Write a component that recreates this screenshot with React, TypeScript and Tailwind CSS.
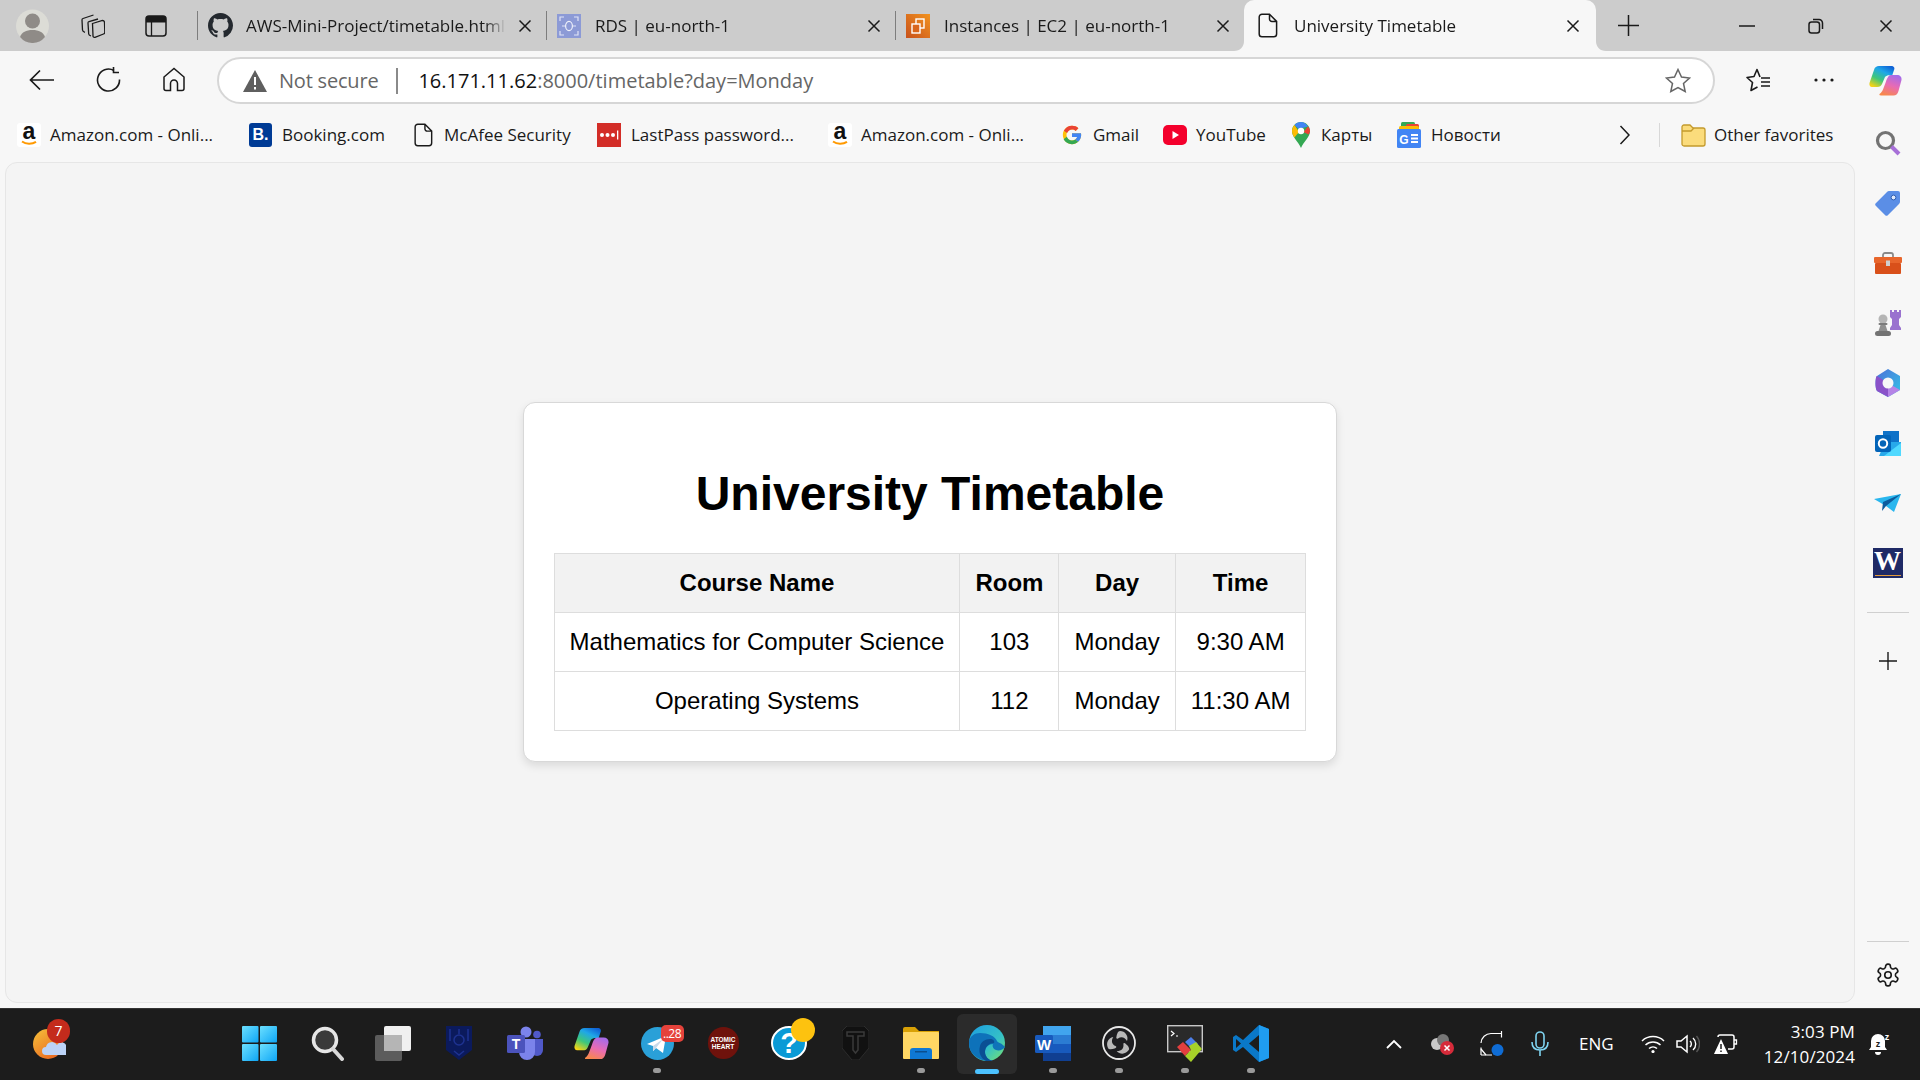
import React from "react";

const UI = { fontFamily: '"Open Sans", "Noto Sans", sans-serif' };

function X({ className = "" }: { className?: string }) {
  return (
    <svg width="14" height="14" viewBox="0 0 14 14" className={className}>
      <path d="M1.500 1.500 12.500 12.500M12.500 1.500 1.500 12.500" stroke="#1a1a1a" strokeWidth="1.500" fill="none" />
    </svg>
  );
}
function Doc({ w = 20, h = 25 }: { w?: number; h?: number }) {
  return (
    <svg width={w} height={h} viewBox="0 0 20 25">
      <path d="M4 1.200h7.500L18.600 8.400V21A2.800 2.800 0 0 1 15.800 23.800H4A2.800 2.800 0 0 1 1.200 21V4A2.800 2.800 0 0 1 4 1.200ZM11.500 1.200V6A2.400 2.400 0 0 0 13.900 8.400H18.600" fill="none" stroke="#1a1a1a" strokeWidth="1.500" />
    </svg>
  );
}
function Github() {
  return (
    <svg width="25" height="25" viewBox="0 0 16 16">
      <path fill="#24292f" d="M8 0C3.58 0 0 3.58 0 8c0 3.54 2.29 6.53 5.47 7.59.4.07.55-.17.55-.38 0-.19-.01-.82-.01-1.49-2.01.37-2.53-.49-2.69-.94-.09-.23-.48-.94-.82-1.13-.28-.15-.68-.52-.01-.53.63-.01 1.08.58 1.23.82.72 1.21 1.87.87 2.33.66.07-.52.28-.87.51-1.07-1.78-.2-3.64-.89-3.64-3.95 0-.87.31-1.59.82-2.15-.08-.2-.36-1.02.08-2.12 0 0 .67-.21 2.2.82.64-.18 1.32-.27 2-.27s1.36.09 2 .27c1.53-1.04 2.2-.82 2.2-.82.44 1.1.16 1.92.08 2.12.51.56.82 1.27.82 2.15 0 3.07-1.87 3.75-3.65 3.95.29.25.54.73.54 1.48 0 1.07-.01 1.93-.01 2.2 0 .21.15.46.55.38A8.010 8.010 0 0 0 16 8c0-4.420-3.580-8-8-8Z" />
    </svg>
  );
}
function Rds() {
  return (
    <svg width="24" height="24" viewBox="0 0 24 24">
      <rect width="24" height="24" fill="#8c9ad6" />
      <path d="M3 7V3h4M21 7V3h-4M3 17v4h4M21 17v4h-4" stroke="#dfe3f5" strokeWidth="1.200" fill="none" />
      <ellipse cx="12" cy="12" rx="3.400" ry="4.600" stroke="#eef0fa" strokeWidth="1.200" fill="none" />
      <path d="M5 12h3M16 12h3" stroke="#dfe3f5" strokeWidth="1.200" />
    </svg>
  );
}
function Ec2() {
  return (
    <svg width="24" height="24" viewBox="0 0 24 24">
      <defs>
        <linearGradient id="ec2g" x1="0" y1="1" x2="1" y2="0">
          <stop offset="0" stopColor="#c8511b" />
          <stop offset="1" stopColor="#f2931f" />
        </linearGradient>
      </defs>
      <rect width="24" height="24" fill="url(#ec2g)" />
      <rect x="10" y="5" width="8" height="9" fill="none" stroke="#fff" strokeWidth="1.400" />
      <rect x="6" y="10" width="8" height="9" fill="#d9661c" stroke="#fff" strokeWidth="1.400" />
    </svg>
  );
}

function CopilotMark({ size = 33, id }: { size?: number; id: string }) {
  return (
    <svg width={size} height={(size * 31) / 33} viewBox="0 0 33 31">
      <defs>
        <linearGradient id={id + "a"} x1="0.800" y1="0" x2="0.200" y2="1">
          <stop offset="0" stopColor="#0f62d6" />
          <stop offset="0.300" stopColor="#1fa7e8" />
          <stop offset="0.650" stopColor="#3ec77a" />
          <stop offset="1" stopColor="#f5d315" />
        </linearGradient>
        <linearGradient id={id + "b"} x1="0.700" y1="0" x2="0.300" y2="1">
          <stop offset="0" stopColor="#a66bea" />
          <stop offset="0.500" stopColor="#e86bb4" />
          <stop offset="1" stopColor="#f8884a" />
        </linearGradient>
      </defs>
      <path d="M10 1h12c3 0 4 2 3 4l-2 6c-2-1-5-1-7 1l-3 7c-1 2-2 3-5 3H3c-2 0-3-2-2.500-4L5 5c.8-3 2.500-4 5-4Z" fill={"url(#" + id + "a)"} />
      <path d="M22 10h6c3 0 5 2 4.500 5l-3 11c-.8 3-2.500 4.500-5 4.500H12c-2 0-2-1-1-2 1-.5 2-2 3-4l3-8c1-3 2.500-6.500 5-6.500Z" fill={"url(#" + id + "b)"} />
    </svg>
  );
}

function Tab({ icon, title, active }: { icon: React.ReactNode; title: string; active?: boolean }) {
  return (
    <div
      className={
        active
          ? "relative h-[51px] w-[352px] flex items-center bg-[#f7f7f7] rounded-t-[10px] pl-[14px] pr-[16px]"
          : "h-[51px] w-[349px] flex items-center"
      }
    >
      {active ? (
        <>
          <svg width="10" height="10" viewBox="0 0 10 10" className="absolute bottom-0 left-[-10px]">
            <path d="M10 0V10H0C6 10 10 6 10 0Z" fill="#f7f7f7" />
          </svg>
          <svg width="10" height="10" viewBox="0 0 10 10" className="absolute bottom-0 right-[-10px]">
            <path d="M0 0V10H10C4 10 0 6 0 0Z" fill="#f7f7f7" />
          </svg>
        </>
      ) : (
        <div className="w-px h-[29px] bg-[#7d7d7d] mr-[10px]" />
      )}
      <div className={active ? "w-[36px] shrink-0 flex" : "w-[38px] shrink-0 flex"}>{icon}</div>
      <div className="flex-1 min-w-0 overflow-hidden whitespace-nowrap text-[17px] text-[#1a1a1a] [mask-image:linear-gradient(to_right,black_92%,transparent_100%)]">
        {title}
      </div>
      <X className={active ? "ml-[10px]" : "ml-[12px] mr-[14px]"} />
    </div>
  );
}

function Bookmark({ icon, label, w, gap = 10 }: { icon: React.ReactNode; label: string; w: number; gap?: number }) {
  return (
    <div className="flex items-center shrink-0" style={{ width: w, gap }}>
      {icon}
      <span className="text-[17px] text-[#1a1a1a] whitespace-nowrap">{label}</span>
    </div>
  );
}

function Amazon() {
  return (
    <svg width="24" height="24" viewBox="0 0 24 24" className="overflow-visible">
      <rect width="24" height="24" rx="3" fill="#fff" />
      <text x="12" y="16" textAnchor="middle" fontSize="23" fontWeight="700" fill="#111" fontFamily="Liberation Sans, sans-serif">a</text>
      <path d="M5 18.500c4 3 10 3 14 .3" stroke="#f90" strokeWidth="2" fill="none" />
    </svg>
  );
}
function Booking() {
  return (
    <div className="w-[23px] h-[24px] rounded-[3px] bg-[#003b95] text-white font-bold text-[16px] leading-[24px] text-center" style={{ fontFamily: '"Liberation Sans", sans-serif' }}>
      B.
    </div>
  );
}
function LastPass() {
  return (
    <svg width="24" height="24" viewBox="0 0 24 24">
      <rect width="24" height="24" fill="#d32d27" />
      <circle cx="5" cy="12" r="2" fill="#fff" />
      <circle cx="10.500" cy="12" r="2" fill="#fff" />
      <circle cx="16" cy="12" r="2" fill="#fff" />
      <rect x="20" y="7.500" width="1.300" height="9" fill="#fff" />
    </svg>
  );
}
function GoogleG() {
  return (
    <svg width="22" height="22" viewBox="0 0 48 48">
      <path fill="#FFC107" d="M43.600 20H24v8.500h11.300C33.700 33.100 29.300 36 24 36c-6.600 0-12-5.400-12-12s5.400-12 12-12c3 0 5.800 1.100 7.900 3l6-6C34.300 5.700 29.400 4 24 4 13 4 4 13 4 24s9 20 20 20 20-9 20-20c0-1.300-.1-2.700-.4-4Z" />
      <path fill="#EA4335" d="m6.300 14.700 7 5.100C15.200 15.200 19.200 12 24 12c3 0 5.800 1.100 7.900 3l6-6C34.300 5.700 29.400 4 24 4 16.300 4 9.700 8.300 6.300 14.700Z" />
      <path fill="#34A853" d="M24 44c5.200 0 9.900-2 13.400-5.200l-6.200-5.200C29.200 35.100 26.700 36 24 36c-5.200 0-9.600-3.300-11.300-8l-7 5.400C9 39.700 16 44 24 44Z" />
      <path fill="#4285F4" d="M43.600 20H24v8.500h11.300c-.8 2.200-2.200 4-4.100 5.200l6.200 5.200C41 35.800 44 30.400 44 24c0-1.300-.1-2.700-.4-4Z" />
    </svg>
  );
}
function YouTube() {
  return (
    <svg width="24" height="24" viewBox="0 0 24 24">
      <rect x="0" y="2" width="24" height="20" rx="5" fill="#f4002c" />
      <path d="M9.500 8v8l6.500-4Z" fill="#fff" />
    </svg>
  );
}
function Maps() {
  return (
    <svg width="18" height="26" viewBox="0 0 18 26">
      <path d="M9 0C4 0 0 4 0 9c0 6 6 10 9 17 3-7 9-11 9-17 0-5-4-9-9-9Z" fill="#34a853" />
      <path d="M9 0C6.400 0 4 1.100 2.500 3l4 4L16 4.500C14.400 1.800 11.900 0 9 0Z" fill="#4285f4" />
      <path d="M2.500 3C1 4.600 0 6.700 0 9c0 2.500 1 4.600 2.400 6.500L7 10Z" fill="#fbbc04" />
      <path d="M16 4.500 11.500 10l5 2.500C17.500 11.200 18 10.100 18 9c0-1.600-.8-3.200-2-4.500Z" fill="#ea4335" />
      <circle cx="9" cy="9" r="3.200" fill="#fff" />
    </svg>
  );
}
function News() {
  return (
    <svg width="24" height="26" viewBox="0 0 24 26">
      <rect x="4" y="0" width="14" height="8" rx="1.500" fill="#34a853" />
      <rect x="9" y="2" width="13" height="8" rx="1.500" fill="#ea4335" />
      <rect x="2" y="4" width="20" height="8" rx="1.500" fill="#fbbc04" />
      <rect x="0" y="7" width="24" height="19" rx="1.500" fill="#4285f4" />
      <text x="7" y="21.500" textAnchor="middle" fontSize="12" fontWeight="700" fill="#fff" fontFamily="Liberation Sans, sans-serif">G</text>
      <path d="M14 13h7M14 16.500h7M14 20h7" stroke="#fff" strokeWidth="1.800" />
    </svg>
  );
}
function Folder() {
  return (
    <svg width="25" height="24" viewBox="0 0 25 24">
      <path d="M1 4a2 2 0 0 1 2-2h6l3 3h10a2 2 0 0 1 2 2v14a2 2 0 0 1-2 2H3a2 2 0 0 1-2-2Z" fill="#fbdc7c" stroke="#c49a2c" strokeWidth="1.300" />
      <path d="M1 8h9l3-3" fill="none" stroke="#c49a2c" strokeWidth="1.300" />
    </svg>
  );
}

const RAIL: React.ReactNode[] = [
  <svg width="28" height="28" viewBox="0 0 28 28">
    <circle cx="11.500" cy="11.500" r="8" fill="none" stroke="#737373" strokeWidth="3.200" />
    <path d="M17.500 17.500 25 25" stroke="#a770d8" strokeWidth="4" />
  </svg>,
  <svg width="26" height="26" viewBox="0 0 26 26">
    <path d="M14 1h9a2 2 0 0 1 2 2v9a3 3 0 0 1-1 2L13 25a2 2 0 0 1-3 0L1 16a2 2 0 0 1 0-3L12 2a3 3 0 0 1 2-1Z" fill="#5b8ee6" />
    <circle cx="18.500" cy="7.500" r="2.400" fill="#dfe9fb" stroke="#2e5cb0" strokeWidth="1" />
  </svg>,
  <svg width="28" height="22" viewBox="0 0 28 22">
    <path d="M9 6V3a2 2 0 0 1 2-2h6a2 2 0 0 1 2 2v3" fill="none" stroke="#8a8a8a" strokeWidth="1.800" />
    <rect x="0" y="5" width="28" height="6" rx="1" fill="#e8662c" />
    <rect x="1" y="11" width="26" height="11" rx="1" fill="#d9501a" />
    <rect x="12" y="8.500" width="4" height="5.500" fill="#cfcfcf" />
  </svg>,
  <svg width="28" height="28" viewBox="0 0 28 28">
    <path d="M16 1h2v2h2V1h3v2h2V1h2v7l-2 2v6l2 3v2H16v-2l2-3v-6l-2-2Z" fill="#9a72cf" />
    <circle cx="9" cy="10" r="4.500" fill="#b5b5b5" />
    <rect x="4.500" y="14" width="9" height="2" rx="1" fill="#7b7b7b" />
    <path d="M6.500 16h5l2 6h-9Z" fill="#8f8f8f" />
    <rect x="1" y="22" width="16" height="5" rx="2.500" fill="#737373" />
  </svg>,
  <svg width="26" height="28" viewBox="0 0 26 28">
    <defs>
      <linearGradient id="m3a" x1="0" y1="0" x2="1" y2="1">
        <stop offset="0" stopColor="#4f6fd8" />
        <stop offset="1" stopColor="#30c5e8" />
      </linearGradient>
    </defs>
    <path d="M13 0 25 7v14l-12 7-11-6c-2-2-2-14 0-15Z" fill="url(#m3a)" />
    <path d="M2 7 13 14v14L2 22c-2-2-2-14 0-15Z" fill="#8a52c9" />
    <path d="M25 21 13 14v14Z" fill="#b583e6" />
    <circle cx="13" cy="14" r="5.500" fill="#f7f7f7" />
  </svg>,
  <svg width="26" height="26" viewBox="0 0 26 26">
    <rect x="8" y="1" width="16" height="13" fill="#0f72c8" />
    <path d="M10 12h16v14H4Z" fill="#28a8ea" />
    <path d="M26 13v13H9Z" fill="#50d9ff" />
    <rect x="0" y="5" width="16" height="17" rx="2" fill="#0364b8" />
    <circle cx="8" cy="13.500" r="4.200" fill="none" stroke="#fff" strokeWidth="2" />
  </svg>,
  <svg width="27" height="18" viewBox="0 0 27 18">
    <path d="M0 5 27 0 20 18 12 12Z" fill="#29b6ee" />
    <path d="M27 0 9 8 8 17 12 12Z" fill="#0c5c9e" />
  </svg>,
  <div className="w-[30px] h-[30px] bg-[#1f2a66] flex flex-col items-center justify-between pb-[2px]">
    <span className="text-white font-bold text-[27px] leading-[26px]" style={{ fontFamily: '"Liberation Serif", serif' }}>W</span>
    <div className="w-[26px] h-px bg-[#e39a3a]" />
  </div>,
];

const W11 = (
  <svg width="35" height="35" viewBox="0 0 35 35" className="mr-[4px]">
    <defs>
      <linearGradient id="w1" x1="0" y1="0" x2="1" y2="1">
        <stop offset="0" stopColor="#6ce0ff" />
        <stop offset="1" stopColor="#0ea5f5" />
      </linearGradient>
    </defs>
    <rect x="0" y="0" width="16.500" height="16.500" rx="1" fill="url(#w1)" />
    <rect x="18" y="0" width="17" height="16.500" rx="1" fill="url(#w1)" />
    <rect x="0" y="18" width="16.500" height="17" rx="1" fill="url(#w1)" />
    <rect x="18" y="18" width="17" height="17" rx="1" fill="url(#w1)" />
  </svg>
);
const SearchI = (
  <svg width="33" height="35" viewBox="0 0 33 35">
    <circle cx="14" cy="14" r="11.500" fill="#3a3a3a" stroke="#e6e6e6" strokeWidth="3.500" />
    <path d="M22 23 31 33" stroke="#d8d8d8" strokeWidth="4" strokeLinecap="round" />
  </svg>
);
const TaskView = (
  <svg width="36" height="35" viewBox="0 0 36 35">
    <rect x="0" y="9" width="27" height="26" rx="2" fill="#5c5c5c" />
    <rect x="9" y="0" width="27" height="25" rx="2" fill="#f0f0f0" />
    <rect x="9" y="9" width="18" height="16" fill="#b5b5b5" />
  </svg>
);
const Shield = (
  <svg width="26" height="34" viewBox="0 0 26 34">
    <path d="M0 0h26v24L13 34 0 24Z" fill="#0b1a5c" />
    <circle cx="13" cy="14" r="5" fill="none" stroke="#1e3290" strokeWidth="1.500" />
    <path d="M4 3v12M22 3v12M13 3v5M8 25l5 4 5-4" stroke="#1e3290" strokeWidth="1.500" fill="none" />
  </svg>
);
const Teams = (
  <svg width="36" height="34" viewBox="0 0 36 34">
    <circle cx="19" cy="6" r="5.500" fill="#7b83eb" />
    <circle cx="30" cy="8.500" r="3.800" fill="#5059c9" />
    <path d="M24 13h12v11a6 6 0 0 1-12 0Z" fill="#5059c9" />
    <path d="M10 13h18v13a8 8 0 0 1-16 0Z" fill="#7b83eb" />
    <rect x="0" y="9" width="18" height="18" rx="1.500" fill="#4b53bc" />
    <text x="9" y="23" textAnchor="middle" fontSize="14" fontWeight="700" fill="#fff" fontFamily="Liberation Sans, sans-serif">T</text>
  </svg>
);
const Telegram = (
  <div className="relative w-[33px] h-[33px]">
    <svg width="33" height="33" viewBox="0 0 33 33">
      <circle cx="16.500" cy="16.500" r="16.500" fill="#2aa0d8" />
      <path d="M6 17 25 9 22 26 15 21 12 24 12 19Z" fill="#fff" />
      <path d="M12 19 22 12 15 21 12 24Z" fill="#c8daea" />
    </svg>
    <div className="absolute top-[-2px] left-[20px] w-[23px] h-[17px] rounded-[5px] bg-[#e5423b] text-white text-[12px] leading-[17px] text-center tracking-[-0.5px]">..28</div>
  </div>
);
const Atomic = (
  <div className="w-[31px] h-[32px] rounded-full bg-[#6f120c] flex items-center justify-center">
    <span className="text-white font-bold text-[6.500px] leading-[7px] text-center" style={{ fontFamily: '"Liberation Sans", sans-serif' }}>ATOMIC<br />HEART</span>
  </div>
);
const Help = (
  <div className="relative w-[36px] h-[34px]">
    <svg width="36" height="34" viewBox="0 0 36 34">
      <ellipse cx="18" cy="17" rx="17" ry="16" fill="#0a9ad6" stroke="#fff" strokeWidth="2" />
      <text x="18" y="27" textAnchor="middle" fontSize="29" fontWeight="700" fill="#fff" fontFamily="Liberation Sans, sans-serif">?</text>
    </svg>
    <div className="absolute top-[-8px] left-[20px] w-[24px] h-[24px] rounded-full bg-[#fdc20f]" />
  </div>
);
const Tank = (
  <svg width="27" height="34" viewBox="0 0 27 34">
    <path d="M5 0h17l5 5v17L17 34h-7L0 22V5Z" fill="#111" stroke="#2c2c2c" strokeWidth="1" />
    <path d="M5 6h17v4h-6v14l-2.500 3-2.500-3V10H5Z" fill="none" stroke="#3a3a3a" strokeWidth="1.500" />
  </svg>
);
const Explorer = (
  <svg width="36" height="32" viewBox="0 0 36 32">
    <path d="M0 2a2 2 0 0 1 2-2h10l4 4h20v6H0Z" fill="#d9a106" />
    <rect x="0" y="5" width="36" height="27" rx="1" fill="#ffd764" />
    <path d="M7 32v-8a3 3 0 0 1 3-3h16a3 3 0 0 1 3 3v8Z" fill="#0f78d4" />
    <rect x="12" y="24" width="12" height="1.500" fill="#0a4e8f" />
  </svg>
);
const Edge = (
  <svg width="36" height="36" viewBox="0 0 36 36">
    <defs>
      <linearGradient id="eg1" x1="0" y1="0" x2="1" y2="1">
        <stop offset="0" stopColor="#1b9de2" />
        <stop offset="0.600" stopColor="#35c1c6" />
        <stop offset="1" stopColor="#7de36a" />
      </linearGradient>
    </defs>
    <circle cx="18" cy="18" r="18" fill="url(#eg1)" />
    <path d="M36 22c-2 3-6 4-9 3-3-1-4-4-3-6-4 0-8 3-8 8 0 4 3 8 8 9-12 1-24-5-24-18C0 11 6 8 11 8c8 0 15 3 17 8 1 2 5 2 8 6Z" fill="#0d6fb8" opacity="0.950" />
    <path d="M17 36c-5-3-8-8-6-15 1-4 5-7 10-7 3 0 5 2 4 4-4 0-9 3-9 9 0 4 3 8 8 9Z" fill="#0a4f94" />
  </svg>
);
const Word = (
  <svg width="36" height="35" viewBox="0 0 36 35">
    <rect x="8" y="0" width="28" height="35" rx="2" fill="#2b7cd3" />
    <rect x="8" y="0" width="28" height="9" fill="#41a5ee" />
    <rect x="8" y="18" width="28" height="9" fill="#185abd" />
    <rect x="8" y="27" width="28" height="8" fill="#103f91" />
    <rect x="0" y="9" width="18" height="18" rx="1.500" fill="#185abd" />
    <text x="9" y="23.500" textAnchor="middle" fontSize="15" fontWeight="700" fill="#fff" fontFamily="Liberation Sans, sans-serif">W</text>
  </svg>
);
const OBS_BLADE = "M18 5C23 5 27 10 25 15C23 11 19 10 16 12.500C14.500 13.500 14 12 14.500 10.500C15 8 16 5 18 5Z";
const Obs = (
  <svg width="34" height="34" viewBox="0 0 34 34">
    <circle cx="17" cy="17" r="16" fill="#1d1d20" stroke="#e8e8e8" strokeWidth="1.800" />
    <path d={OBS_BLADE} fill="#b8b8b8" />
    <path d={OBS_BLADE} fill="#b8b8b8" transform="rotate(120 17 17)" />
    <path d={OBS_BLADE} fill="#b8b8b8" transform="rotate(240 17 17)" />
  </svg>
);
const Terminal = (
  <svg width="36" height="37" viewBox="0 0 36 37">
    <rect x="0.700" y="0.700" width="34.600" height="26" fill="#2a2a2a" stroke="#c8c8c8" strokeWidth="1.400" />
    <path d="M4 6 7 8.500 4 11M9 11h2" stroke="#fff" strokeWidth="1.200" fill="none" />
    <path d="M10 22 16 17 24 25 18 31Z" fill="#e23f3f" />
    <path d="M18 17 24 12 31 19 25 24Z" fill="#4d7fe8" />
    <path d="M18 31 24 25 22 21 29 17 35 24 24 37Z" fill="#a7d129" />
  </svg>
);
const VsCode = (
  <svg width="36" height="37" viewBox="0 0 36 37">
    <path d="M26 0 36 4v29l-10 4L10 22 3 27 0 25V12l3-2 7 5Z" fill="#0a78c8" />
    <path d="M26 0 36 4v29l-10 4Z" fill="#1f9cf0" />
    <path d="M26 10v17l-10-8.500Z" fill="#1c1c1c" />
    <path d="M3 14v9l5-4.500Z" fill="#1c1c1c" />
  </svg>
);

const TASK: { el: React.ReactNode; dot?: boolean; active?: boolean }[] = [
  { el: W11 },
  { el: SearchI },
  { el: TaskView },
  { el: Shield },
  { el: Teams },
  { el: <CopilotMark size={35} id="tb" /> },
  { el: Telegram, dot: true },
  { el: Atomic },
  { el: Help },
  { el: Tank },
  { el: Explorer, dot: true },
  { el: Edge, active: true },
  { el: Word, dot: true },
  { el: Obs, dot: true },
  { el: Terminal, dot: true },
  { el: VsCode, dot: true },
];

function Taskbar() {
  return (
    <div className="h-[72px] shrink-0 bg-[#1c1c1c] border-t border-[#333333] flex items-stretch text-white" style={UI}>
      <div className="w-[228px] shrink-0 pl-[33px] pt-[10px]">
        <div className="relative w-[37px] h-[50px]">
          <svg width="33" height="32" viewBox="0 0 33 32" className="absolute top-[9px] left-0">
            <defs>
              <linearGradient id="sun" x1="0" y1="0" x2="0.800" y2="1">
                <stop offset="0" stopColor="#f6c13a" />
                <stop offset="1" stopColor="#e9641f" />
              </linearGradient>
            </defs>
            <circle cx="15" cy="16" r="15" fill="url(#sun)" />
            <path d="M13 27a4 4 0 0 1 0-8 6 6 0 0 1 11-2 5 5 0 0 1 9 5v5Z" fill="#bcd3f7" />
          </svg>
          <div className="absolute top-[0px] left-[14px] w-[23px] h-[24px] rounded-full bg-[#c42b1c] text-white text-[14px] leading-[24px] text-center">7</div>
        </div>
      </div>
      <div className="flex">
        {TASK.map((t, i) => (
          <div key={i} className="relative w-[66px] flex items-center justify-center pb-[3px]">
            {t.active && <div className="absolute left-[3px] right-[3px] top-[5px] bottom-[6px] rounded-[6px] bg-[#2b2b2b]" />}
            <div className="relative flex">{t.el}</div>
            {t.dot && <div className="absolute bottom-[7px] left-1/2 -translate-x-1/2 w-[8px] h-[5px] rounded-full bg-[#9a9a9a]" />}
            {t.active && <div className="absolute bottom-[6px] left-1/2 -translate-x-1/2 w-[24px] h-[5px] rounded-full bg-[#4cc2ff]" />}
          </div>
        ))}
      </div>
      <div className="flex-1 flex items-center pl-[102px] pb-[1px]">
        <svg width="16" height="10" viewBox="0 0 16 10" className="shrink-0">
          <path d="M1 9 8 2l7 7" fill="none" stroke="#fff" strokeWidth="1.800" />
        </svg>
        <svg width="25" height="22" viewBox="0 0 25 22" className="ml-[28px] shrink-0">
          <circle cx="7" cy="11" r="6" fill="#c9c9c9" />
          <circle cx="13" cy="7" r="6" fill="#777777" />
          <circle cx="17" cy="15" r="7" fill="#d62b3a" />
          <path d="M14.500 12.500 19.500 17.500M19.500 12.500 14.500 17.500" stroke="#fff" strokeWidth="1.500" />
        </svg>
        <svg width="24" height="26" viewBox="0 0 24 26" className="ml-[25px] shrink-0">
          <path d="M1 12A10 10 0 0 1 11 2.500H21M1 16.500V24M1 24h11" fill="none" stroke="#fff" strokeWidth="1.200" />
          <path d="M21.500 0v6.500M1 18l5 6" fill="none" stroke="#fff" strokeWidth="1.200" />
          <circle cx="17.500" cy="19" r="6" fill="#0f6cd4" />
        </svg>
        <svg width="18" height="26" viewBox="0 0 18 26" className="ml-[27px] shrink-0">
          <rect x="5" y="1" width="8" height="16" rx="4" fill="none" stroke="#7fd4f0" strokeWidth="1.600" />
          <path d="M1 11c0 5 3 8 8 8s8-3 8-8M9 19v6" fill="none" stroke="#7fd4f0" strokeWidth="1.600" />
        </svg>
        <span className="ml-[30px] w-[35px] text-[17px] whitespace-nowrap">ENG</span>
        <svg width="24" height="18" viewBox="0 0 24 18" className="ml-[27px] shrink-0">
          <path d="M1 6a16 16 0 0 1 22 0M4.500 10a11 11 0 0 1 15 0M8 13.500a6 6 0 0 1 8 0" fill="none" stroke="#fff" strokeWidth="1.500" />
          <circle cx="12" cy="16.500" r="1.600" fill="#fff" />
        </svg>
        <svg width="24" height="20" viewBox="0 0 24 20" className="ml-[11px] shrink-0">
          <path d="M1 7h4l6-5v16l-6-5H1Z" fill="none" stroke="#fff" strokeWidth="1.500" />
          <path d="M14 7a4 4 0 0 1 0 6M17 4a8 8 0 0 1 0 12" fill="none" stroke="#fff" strokeWidth="1.400" />
          <path d="M20.500 2a12 12 0 0 1 0 16" fill="none" stroke="#555" strokeWidth="1.400" />
        </svg>
        <svg width="24" height="22" viewBox="0 0 24 22" className="ml-[14px] shrink-0">
          <path d="M4 4a2 2 0 0 1 2-2h12a2 2 0 0 1 2 2v10a2 2 0 0 1-2 2h-4" fill="none" stroke="#fff" strokeWidth="1.500" />
          <path d="M20 7h2.500v4H20" fill="none" stroke="#fff" strokeWidth="1.300" />
          <path d="M7 6 14 21H0Z" fill="#fff" />
          <path d="M7 11v5M7 17.500v1.500" stroke="#1c1c1c" strokeWidth="1.500" />
        </svg>
        <div className="w-[117px] shrink-0 text-right text-[17px] leading-[25px] tracking-[0.1px]">
          <div>3:03 PM</div>
          <div>12/10/2024</div>
        </div>
        <svg width="22" height="24" viewBox="0 0 22 24" className="ml-[14px] shrink-0">
          <path d="M9 2a7 7 0 0 1 7 7v6l2 3H0l2-3V9a7 7 0 0 1 7-7Z" fill="#fff" />
          <path d="M6 20a3 3 0 0 0 6 0Z" fill="#fff" />
          <text x="9" y="15" textAnchor="middle" fontSize="9" fontWeight="700" fill="#1c1c1c" fontFamily="Liberation Sans, sans-serif">z</text>
          <text x="18" y="8" textAnchor="middle" fontSize="9" fontWeight="700" fill="#fff" fontFamily="Liberation Sans, sans-serif">z</text>
        </svg>
      </div>
    </div>
  );
}

const ROWS = [
  ["Mathematics for Computer Science", "103", "Monday", "9:30 AM"],
  ["Operating Systems", "112", "Monday", "11:30 AM"],
];

export default function App() {
  return (
    <div className="w-[1920px] h-[1080px] overflow-hidden flex flex-col bg-[#f7f7f7]" style={UI}>
      {/* Tab strip */}
      <div className="h-[51px] shrink-0 bg-[#cccccc] flex items-center">
        <div className="w-[197px] shrink-0 flex items-center pl-[16px]">
          <svg width="33" height="34" viewBox="0 0 33 34">
            <circle cx="16.500" cy="17" r="16.500" fill="#dcdcd6" />
            <circle cx="16.500" cy="12" r="7.500" fill="#8f8b87" />
            <path d="M4 28c2-5 6-7 12.500-7S27 23 29 28a16 16 0 0 1-25 0Z" fill="#8f8b87" />
          </svg>
          <svg width="24" height="24" viewBox="0 0 24 24" className="ml-[32px]">
            <path d="M11.500 9.500 21.500 6.500a2 2 0 0 1 2 2l.3 9.500a2 2 0 0 1-1.300 2L14 23.300a1.500 1.500 0 0 1-2-1.500Z" fill="none" stroke="#1a1a1a" strokeWidth="1.300" />
            <path d="M17 5 8 7.500a1.500 1.500 0 0 0-1 1.500l.7 11c.1 1 .8 1.500 2.300 2" fill="none" stroke="#1a1a1a" strokeWidth="1.300" />
            <path d="M12.500 1 2 4.500a1.500 1.500 0 0 0-1 1.500l.5 10c.1 1.200 1.200 2 2.500 2.300" fill="none" stroke="#1a1a1a" strokeWidth="1.300" />
          </svg>
          <svg width="22" height="22" viewBox="0 0 22 22" className="ml-[40px]">
            <rect x="1" y="1" width="20" height="20" rx="3" fill="none" stroke="#1a1a1a" strokeWidth="1.500" />
            <path d="M1 4a3 3 0 0 1 3-3h14a3 3 0 0 1 3 3v3.500H1Z" fill="#1a1a1a" />
            <path d="M6.500 7v14" stroke="#1a1a1a" strokeWidth="1.300" />
          </svg>
        </div>
        <Tab icon={<Github />} title="AWS-Mini-Project/timetable.html" />
        <Tab icon={<Rds />} title="RDS | eu-north-1" />
        <Tab icon={<Ec2 />} title="Instances | EC2 | eu-north-1" />
        <Tab active icon={<Doc />} title="University Timetable" />
        <svg width="21" height="21" viewBox="0 0 21 21" className="ml-[22px]">
          <path d="M10.500 0v21M0 10.500h21" stroke="#1a1a1a" strokeWidth="1.500" />
        </svg>
        <svg width="16" height="2" viewBox="0 0 16 2" className="ml-[100px]">
          <path d="M0 1h16" stroke="#1a1a1a" strokeWidth="1.500" />
        </svg>
        <svg width="16" height="16" viewBox="0 0 16 16" className="ml-[53px]">
          <rect x="1" y="4" width="10.500" height="11" rx="2.500" fill="none" stroke="#1a1a1a" strokeWidth="1.500" />
          <path d="M5 1.500h6a3.500 3.500 0 0 1 3.500 3.500v6" fill="none" stroke="#1a1a1a" strokeWidth="1.500" />
        </svg>
        <X className="ml-[55px]" />
      </div>

      {/* Address row */}
      <div className="h-[57px] shrink-0 flex items-center">
        <svg width="26" height="22" viewBox="0 0 26 22" className="ml-[29px] shrink-0">
          <path d="M25 11H2M11 1.500 1.500 11 11 20.500" fill="none" stroke="#1a1a1a" strokeWidth="1.700" />
        </svg>
        <svg width="25" height="25" viewBox="0 0 25 25" className="ml-[41px] shrink-0">
          <path d="M18 3.500A11 11 0 1 0 23.500 12.500" fill="none" stroke="#1a1a1a" strokeWidth="1.600" />
          <path d="M17.500 0v5.500H23" fill="none" stroke="#1a1a1a" strokeWidth="1.600" />
        </svg>
        <svg width="24" height="25" viewBox="0 0 24 25" className="ml-[41px] shrink-0">
          <path d="M8.500 23.500H4A2 2 0 0 1 2 21.500V10l10-8.500L22 10v11.500a2 2 0 0 1-2 2h-4.500v-7a3.500 3.500 0 0 0-7 0Z" fill="none" stroke="#1a1a1a" strokeWidth="1.500" />
        </svg>
        <div className="ml-[31px] mt-[2px] w-[1498px] h-[47px] shrink-0 rounded-full border-2 border-[#d6d6d6] bg-white flex items-center pl-[24px] pr-[22px]">
          <svg width="24" height="22" viewBox="0 0 24 22" className="shrink-0">
            <path d="M12 0 24 22H0Z" fill="#5f5f5f" />
            <path d="M12 7v8M12 17v2.500" stroke="#fff" strokeWidth="2" />
          </svg>
          <span className="ml-[12px] text-[20px] text-[#666666] tracking-[-0.2px] whitespace-nowrap">Not secure</span>
          <div className="w-[2px] h-[26px] bg-[#8a8a8a] ml-[18px]" />
          <span className="ml-[20px] text-[20px] whitespace-nowrap text-[#666666] flex-1">
            <span className="text-[#111111]">16.171.11.62</span>:8000/timetable?day=Monday
          </span>
          <svg width="26" height="25" viewBox="0 0 26 25">
            <path d="m13 1.500 3.500 7.500 8 1-6 5.500 1.700 8L13 19.500 5.800 23.500l1.700-8-6-5.500 8-1Z" fill="none" stroke="#666666" strokeWidth="1.500" />
          </svg>
        </div>
        <svg width="26" height="25" viewBox="0 0 26 25" className="ml-[31px] mt-[2px] shrink-0">
          <path d="M14 9 11 1.500 8 8.500 1 9.500 6.500 14.500 5 22.500 11.500 19" fill="none" stroke="#1a1a1a" strokeWidth="1.600" strokeLinejoin="round" />
          <path d="M15 10h9M15 14h9M15 18h9" stroke="#1a1a1a" strokeWidth="1.500" />
        </svg>
        <svg width="20" height="4" viewBox="0 0 20 4" className="ml-[42px] shrink-0">
          <circle cx="2" cy="2" r="1.600" fill="#1a1a1a" />
          <circle cx="10" cy="2" r="1.600" fill="#1a1a1a" />
          <circle cx="18" cy="2" r="1.600" fill="#1a1a1a" />
        </svg>
        <div className="ml-[35px] mt-[2px] shrink-0 flex">
          <CopilotMark id="top" size={33} />
        </div>
      </div>

      {/* Body: favourites + page on the left, side rail on the right */}
      <div className="flex-1 min-h-0 flex">
        <div className="w-[1855px] shrink-0 flex flex-col">
          <div className="h-[54px] shrink-0 flex items-center pl-[17px]">
            <Bookmark w={232} gap={9} icon={<Amazon />} label="Amazon.com - Onli..." />
            <Bookmark w={165} gap={10} icon={<Booking />} label="Booking.com" />
            <Bookmark w={183} gap={11} icon={<Doc w={19} h={24} />} label="McAfee Security" />
            <Bookmark w={231} gap={10} icon={<LastPass />} label="LastPass password..." />
            <Bookmark w={233} gap={9} icon={<Amazon />} label="Amazon.com - Onli..." />
            <Bookmark w={102} gap={10} icon={<GoogleG />} label="Gmail" />
            <Bookmark w={129} gap={9} icon={<YouTube />} label="YouTube" />
            <Bookmark w={105} gap={11} icon={<Maps />} label="Карты" />
            <Bookmark w={222} gap={10} icon={<News />} label="Новости" />
            <svg width="11" height="20" viewBox="0 0 11 20" className="shrink-0">
              <path d="M1.500 1 10 10l-8.500 9" fill="none" stroke="#1a1a1a" strokeWidth="1.500" />
            </svg>
            <div className="w-px h-[24px] bg-[#d8d8d8] ml-[29px] mr-[21px]" />
            <Bookmark w={160} gap={8} icon={<Folder />} label="Other favorites" />
          </div>
          <div className="flex-1 min-h-0 ml-[5px] mb-[5px] pb-[1px] rounded-[12px] bg-[#f4f4f4] border border-[#e6e6e6] flex items-center justify-center">
            <div className="w-fit rounded-[12px] border border-[#d8d8d8] bg-white px-[30px] pt-[31px] pb-[30px] shadow-[0_4px_8px_rgba(0,0,0,0.1)]" style={{ fontFamily: '"Liberation Sans", Arial, sans-serif' }}>
              <h1 className="text-[48px] leading-[55px] font-bold text-center text-black my-8">University Timetable</h1>
              <table className="border-collapse text-[24px] text-black">
                <thead>
                  <tr>
                    {["Course Name", "Room", "Day", "Time"].map((h) => (
                      <th key={h} className="border border-[#dddddd] bg-[#f2f2f2] p-[15px] leading-[28px] font-bold text-center">
                        {h}
                      </th>
                    ))}
                  </tr>
                </thead>
                <tbody>
                  {ROWS.map((r) => (
                    <tr key={r[0]}>
                      {r.map((c) => (
                        <td key={c} className="border border-[#dddddd] p-[15px] leading-[28px] text-center">
                          {c}
                        </td>
                      ))}
                    </tr>
                  ))}
                </tbody>
              </table>
            </div>
          </div>
        </div>
        <div className="flex-1 flex flex-col items-center pt-[5px] pb-[20px]">
          {RAIL.map((icon, i) => (
            <div key={i} className="h-[60px] shrink-0 flex items-center justify-center">
              {icon}
            </div>
          ))}
          <div className="w-[42px] h-px shrink-0 bg-[#d0d0d0] mt-[19px]" />
          <svg width="18" height="18" viewBox="0 0 18 18" className="mt-[39px] shrink-0">
            <path d="M9 0v18M0 9h18" stroke="#1a1a1a" strokeWidth="1.400" />
          </svg>
          <div className="flex-1" />
          <div className="w-[42px] h-px shrink-0 bg-[#d0d0d0] mb-[20px]" />
          <svg width="26" height="26" viewBox="0 0 24 24" fill="none" stroke="#1a1a1a" strokeWidth="1.500" className="shrink-0">
            <circle cx="12" cy="12" r="3" />
            <path d="M12.220 2h-.44a2 2 0 0 0-2 2v.18a2 2 0 0 1-1 1.730l-.43.250a2 2 0 0 1-2 0l-.150-.080a2 2 0 0 0-2.730.730l-.220.380a2 2 0 0 0 .730 2.730l.150.100a2 2 0 0 1 1 1.720v.510a2 2 0 0 1-1 1.740l-.150.090a2 2 0 0 0-.730 2.730l.220.380a2 2 0 0 0 2.730.730l.150-.080a2 2 0 0 1 2 0l.430.250a2 2 0 0 1 1 1.730V20a2 2 0 0 0 2 2h.440a2 2 0 0 0 2-2v-.180a2 2 0 0 1 1-1.730l.430-.250a2 2 0 0 1 2 0l.150.080a2 2 0 0 0 2.730-.730l.220-.390a2 2 0 0 0-.730-2.730l-.150-.080a2 2 0 0 1-1-1.740v-.500a2 2 0 0 1 1-1.740l.150-.090a2 2 0 0 0 .730-2.730l-.220-.380a2 2 0 0 0-2.730-.730l-.150.080a2 2 0 0 1-2 0l-.430-.250a2 2 0 0 1-1-1.730V4a2 2 0 0 0-2-2z" />
          </svg>
        </div>
      </div>

      <Taskbar />
    </div>
  );
}
